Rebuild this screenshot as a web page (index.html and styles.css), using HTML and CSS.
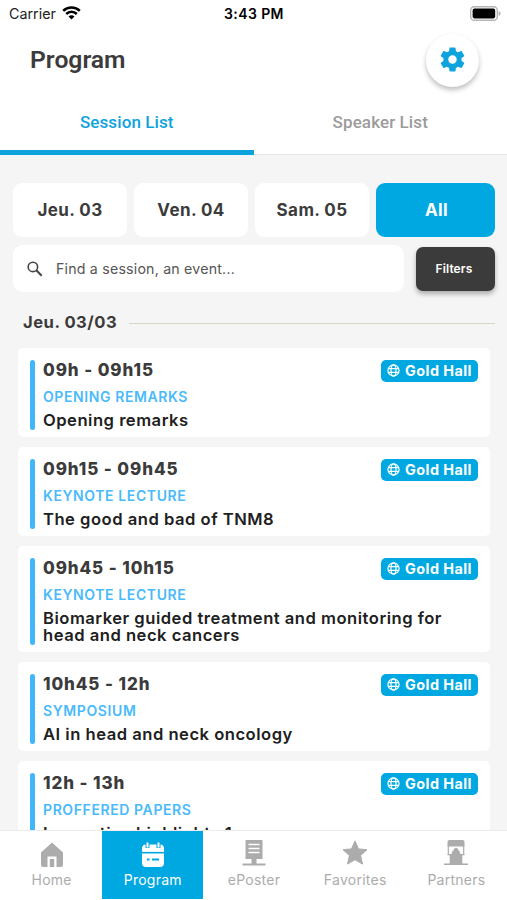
FILE: index.html
```html
<!DOCTYPE html>
<html lang="en">
<head>
    <meta charset="UTF-8">
    <meta name="viewport" content="width=device-width, initial-scale=1.0">
    <title>Program</title>
    <link rel="stylesheet" href="styles.css">
</head>
<body>
    <svg class="sprite" width="0" height="0">
        <symbol id="globe" viewBox="0 0 14 14">
            <g fill="none" stroke="currentColor" stroke-width="1.3">
                <circle cx="7" cy="7" r="6"/>
                <ellipse cx="7" cy="7" rx="2.7" ry="6"/>
                <path d="M1.500 5h11M1.500 9h11"/>
            </g>
        </symbol>
    </svg>

    <header class="header">
        <div class="status-bar">
            <div class="carrier">
                <span>Carrier</span>
                <svg width="19" height="14" viewBox="0 0 19 14">
                    <g fill="none" stroke="#000" stroke-width="2.5">
                        <path d="M1.200 4.800a11.800 11.800 0 0 1 16.600 0"/>
                        <path d="M4.200 8a7.500 7.500 0 0 1 10.600 0"/>
                    </g>
                    <path d="M9.500 13.600L6.500 10.600a4.200 4.200 0 0 1 6 0z"/>
                </svg>
            </div>
            <div class="clock">3:43 PM</div>
            <svg class="battery" width="31" height="15" viewBox="0 0 31 15">
                <rect x=".7" y=".7" width="26.600" height="13.600" rx="3.600" fill="#fff" stroke="#b5b5b5" stroke-width="1.400"/>
                <rect x="2.600" y="2.600" width="22.600" height="9.800" rx="1.800"/>
                <path d="M28.600 5v5c1.400-.5 2-1.400 2-2.500s-.6-2-2-2.500z" fill="#b5b5b5"/>
            </svg>
        </div>
        <div class="title-bar">
            <h1>Program</h1>
            <button class="settings" aria-label="Settings">
                <svg width="29" height="29" viewBox="0 0 24 24" fill="#0fa3dd">
                    <path d="M19.430 12.980c.04-.32.07-.64.07-.98s-.03-.66-.07-.98l2.110-1.650c.19-.15.24-.42.12-.64l-2-3.460c-.12-.22-.39-.3-.61-.22l-2.490 1c-.52-.4-1.080-.73-1.690-.98l-.38-2.650C14.460 2.180 14.250 2 14 2h-4c-.25 0-.46.18-.49.42l-.38 2.650c-.61.25-1.170.59-1.690.98l-2.490-1c-.23-.09-.49 0-.61.22l-2 3.460c-.13.22-.07.49.12.64l2.110 1.650c-.04.32-.07.65-.07.98s.03.66.07.98l-2.110 1.650c-.19.15-.24.42-.12.64l2 3.460c.12.22.39.3.61.22l2.490-1c.52.4 1.080.73 1.690.98l.38 2.650c.03.24.24.42.49.42h4c.25 0 .46-.18.49-.42l.38-2.650c.61-.25 1.170-.59 1.690-.98l2.490 1c.23.09.49 0 .61-.22l2-3.460c.12-.22.07-.49-.12-.64l-2.110-1.650zM12 15.500c-1.930 0-3.500-1.570-3.500-3.500s1.570-3.500 3.500-3.500 3.500 1.570 3.500 3.500-1.570 3.500-3.500 3.500z"/>
                </svg>
            </button>
        </div>
        <nav class="tabs">
            <a class="tab active">Session List</a>
            <a class="tab">Speaker List</a>
        </nav>
    </header>

    <main class="content">
        <div class="days">
            <button class="day">Jeu. 03</button>
            <button class="day">Ven. 04</button>
            <button class="day">Sam. 05</button>
            <button class="day selected">All</button>
        </div>
        <div class="search-row">
            <div class="search">
                <svg width="16" height="16" viewBox="0 0 16 16" fill="none" stroke="#444" stroke-width="1.600">
                    <circle cx="5.900" cy="5.900" r="4.700"/>
                    <path d="M9.300 9.300l5.400 5.400" stroke-width="2"/>
                </svg>
                <span>Find a session, an event...</span>
            </div>
            <button class="filters">Filters</button>
        </div>

        <h2 class="date">Jeu. 03/03</h2>

        <div class="sessions">
            <article class="session">
                <div class="info">
                    <div class="time">09h - 09h15</div>
                    <div class="type">OPENING REMARKS</div>
                    <div class="name">Opening remarks</div>
                </div>
                <div class="hall"><svg width="13" height="13"><use href="#globe"/></svg>Gold Hall</div>
            </article>
            <article class="session">
                <div class="info">
                    <div class="time">09h15 - 09h45</div>
                    <div class="type">KEYNOTE LECTURE</div>
                    <div class="name">The good and bad of TNM8</div>
                </div>
                <div class="hall"><svg width="13" height="13"><use href="#globe"/></svg>Gold Hall</div>
            </article>
            <article class="session">
                <div class="info">
                    <div class="time">09h45 - 10h15</div>
                    <div class="type">KEYNOTE LECTURE</div>
                    <div class="name">Biomarker guided treatment and monitoring for<br>head and neck cancers</div>
                </div>
                <div class="hall"><svg width="13" height="13"><use href="#globe"/></svg>Gold Hall</div>
            </article>
            <article class="session">
                <div class="info">
                    <div class="time">10h45 - 12h</div>
                    <div class="type">SYMPOSIUM</div>
                    <div class="name">AI in head and neck oncology</div>
                </div>
                <div class="hall"><svg width="13" height="13"><use href="#globe"/></svg>Gold Hall</div>
            </article>
            <article class="session">
                <div class="info">
                    <div class="time">12h - 13h</div>
                    <div class="type">PROFFERED PAPERS</div>
                    <div class="name">Innovative highlights 1</div>
                </div>
                <div class="hall"><svg width="13" height="13"><use href="#globe"/></svg>Gold Hall</div>
            </article>
        </div>
    </main>

    <nav class="bottom-nav">
        <a class="nav-item">
            <svg width="28" height="28" viewBox="0 0 28 28" fill="currentColor">
                <path fill-rule="evenodd" d="M14 2.500L25 12.500V25a2 2 0 0 1-2 2H5a2 2 0 0 1-2-2V12.500zM9.500 27h9V16.500h-9z"/>
                <path d="M11.800 19h4.400v8h-4.400z"/>
            </svg>
            <span>Home</span>
        </a>
        <a class="nav-item current">
            <svg width="28" height="28" viewBox="0 0 28 28">
                <rect x="3" y="4.500" width="22" height="22.500" rx="4" fill="#fff"/>
                <path d="M3 12.700h22" stroke="#00a8e1" stroke-width="1.600"/>
                <path d="M8.500 3.500v4.500M19.500 3.500v4.500" stroke="#00a8e1" stroke-width="4"/>
                <path d="M8.500 2.500v5M19.500 2.500v5" stroke="#fff" stroke-width="2"/>
                <path d="M8 19.500h2.500M13 19.500h7" stroke="#00a8e1" stroke-width="1.800"/>
            </svg>
            <span>Program</span>
        </a>
        <a class="nav-item">
            <svg width="28" height="28" viewBox="0 0 28 28" fill="currentColor">
                <path d="M5.500 0h17v19h-17z"/>
                <path d="M8.500 4.500h11M8.500 8.500h11M8.500 12.500h11" stroke="#fff" stroke-width="1.400"/>
                <path d="M11.500 19h5v5h-5zM2.500 23.500h23V25.500h-23z"/>
            </svg>
            <span>ePoster</span>
        </a>
        <a class="nav-item">
            <svg width="28" height="28" viewBox="0 0 28 28" fill="currentColor">
                <path d="M14 .9l3.500 8 8.500.8-6.400 5.800 1.900 8.600L14 19.700l-7.500 4.400 1.900-8.600L2 9.700l8.500-.8z" stroke="currentColor" stroke-linejoin="round"/>
            </svg>
            <span>Favorites</span>
        </a>
        <a class="nav-item">
            <svg width="28" height="28" viewBox="0 0 28 28" fill="currentColor">
                <path d="M7.500 0h13a2 2 0 0 1 2 2v4.500h-17V2a2 2 0 0 1 2-2z"/>
                <path d="M6.300 6v8.500M21.700 6v8.500" stroke="currentColor" stroke-width="1.200"/>
                <path d="M5.500 14h4.200c.3-2.400 1-3.300 2-3.700-.4-1.300.8-2.300 2.300-2.300s2.700 1 2.300 2.300c1 .4 1.700 1.300 2 3.700h4.200v1.200h-2.200v8.300H26V25H2v-1.500h5.700v-8.300H5.500z"/>
            </svg>
            <span>Partners</span>
        </a>
    </nav>
</body>
</html>
```

FILE: styles.css
```css
* {
    box-sizing: border-box;
}
body {
    margin: 0;
    height: 900px;
    display: flex;
    flex-direction: column;
    overflow: hidden;
    background: #f5f5f5;
    font-family: Inter, sans-serif;
    color: #3b3b3b;
}
button {
    border: none;
    padding: 0;
    font-family: inherit;
    color: inherit;
}
svg {
    display: block;
    flex-shrink: 0;
}
.sprite {
    position: absolute;
}

/* Header */
.header {
    flex: none;
    height: 155px;
    background: #fff;
    border-bottom: 1px solid #e6e6e6;
}
.status-bar {
    height: 28px;
    display: grid;
    grid-template-columns: 1fr auto 1fr;
    align-items: center;
    padding: 0 6px 1px 9px;
    color: #000;
}
.carrier {
    display: flex;
    align-items: center;
    gap: 6px;
    font-size: 14.3px;
    color: #222;
}
.carrier svg {
    margin-top: -2px;
}
.clock {
    font-size: 14px;
    font-weight: 600;
    letter-spacing: 0.4px;
    margin-right: 2px;
}
.battery {
    justify-self: end;
    margin-top: -1px;
}
.title-bar {
    height: 62px;
    display: flex;
    justify-content: space-between;
    align-items: center;
    padding: 2px 28px 0 30px;
}
h1 {
    margin: 0;
    padding-bottom: 1px;
    font-family: Roboto, sans-serif;
    font-size: 24.7px;
    font-weight: 600;
}
.settings {
    width: 53px;
    height: 53px;
    display: flex;
    align-items: center;
    justify-content: center;
    padding-bottom: 1px;
    border-radius: 50%;
    background: #fff;
    box-shadow: 0 3px 5px rgba(0, 0, 0, 0.25);
}
.tabs {
    height: 65px;
    display: flex;
}
.tab {
    flex: 1;
    padding-top: 20px;
    border-bottom: 5px solid transparent;
    font-family: Roboto, sans-serif;
    font-size: 17px;
    font-weight: 500;
    line-height: 24px;
    letter-spacing: 0.1px;
    text-align: center;
    color: #9b9b9b;
}
.tab.active {
    color: #0fa3dd;
    border-color: #0fa3dd;
}

/* Filters */
.content {
    flex: 1;
    min-height: 0;
    overflow: hidden;
    padding: 28px 12px 0 13px;
}
.days {
    display: grid;
    grid-template-columns: 114px 114px 114px 1fr;
    gap: 7px;
}
.day {
    height: 54px;
    border-radius: 9px;
    background: #fff;
    font-size: 17px;
    font-weight: 650;
    letter-spacing: 0.4px;
}
.day.selected {
    padding-left: 2px;
    background: #00a8e1;
    color: #fff;
}
.search-row {
    display: flex;
    align-items: center;
    gap: 12px;
    margin-top: 8px;
}
.search {
    flex: 1;
    height: 47px;
    display: flex;
    align-items: center;
    gap: 13px;
    padding-left: 14px;
    border-radius: 10px;
    background: #fff;
    font-size: 14.2px;
    letter-spacing: 0.2px;
    color: #555;
}
.filters {
    width: 79px;
    height: 44px;
    padding-right: 3px;
    border-radius: 7px;
    background: #3b3b3b;
    color: #fff;
    font-size: 12px;
    font-weight: 600;
    letter-spacing: 0.1px;
    box-shadow: 0 3px 5px rgba(0, 0, 0, 0.3);
}
.date {
    display: flex;
    align-items: center;
    gap: 12px;
    margin: 20px 0 15px 10px;
    font-size: 16.6px;
    font-weight: 650;
    line-height: 21px;
    letter-spacing: 0.5px;
}
.date::after {
    content: "";
    flex: 1;
    height: 1px;
    margin-top: 2px;
    background: #d3d8c8;
}

/* Session cards */
.sessions {
    display: flex;
    flex-direction: column;
    gap: 10px;
    padding: 0 5px;
}
.session {
    display: flex;
    align-items: flex-start;
    padding: 12px 12px 7px;
    border-radius: 5px;
    background: #fff;
}
.info {
    position: relative;
    flex: 1;
    min-width: 0;
    padding-left: 13px;
    white-space: nowrap;
}
.info::before {
    content: "";
    position: absolute;
    left: 0;
    top: 0;
    bottom: 0;
    width: 5px;
    border-radius: 3px;
    background: #40b7f8;
}
.time {
    font-size: 17px;
    font-weight: 800;
    line-height: 20px;
    letter-spacing: 0.9px;
}
.type {
    margin-top: 7px;
    font-size: 14px;
    font-weight: 600;
    line-height: 20px;
    letter-spacing: 0.6px;
    color: #4abafa;
}
.name {
    padding: 5px 0 1px;
    font-size: 16.6px;
    font-weight: 600;
    line-height: 17px;
    letter-spacing: 0.5px;
    color: #202020;
}
.hall {
    flex: none;
    width: 97px;
    height: 22px;
    display: flex;
    align-items: center;
    gap: 5px;
    padding: 0 0 1px 6px;
    border-radius: 5px;
    background: #00a8e1;
    color: #fff;
    font-size: 14.4px;
    font-weight: 700;
    letter-spacing: 0.45px;
}

/* Bottom navigation */
.bottom-nav {
    flex: none;
    height: 70px;
    display: flex;
    padding: 0 0 1px 1px;
    border-top: 1px solid #ebebeb;
    background: #fff;
}
.nav-item {
    flex: 1;
    display: flex;
    flex-direction: column;
    align-items: center;
    padding-top: 9px;
    gap: 2px;
    font-size: 14px;
    line-height: 20px;
    letter-spacing: 0.25px;
    color: #acacac;
}
.nav-item.current {
    background: #00a8e1;
    color: #fff;
}
```
